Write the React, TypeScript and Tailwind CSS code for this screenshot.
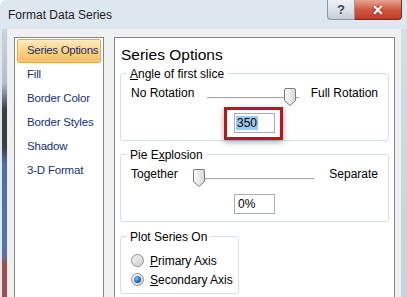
import React from 'react';

const font = { fontFamily: '"Liberation Sans", Arial, sans-serif' };

function Thumb() {
  return (
    <svg width="12" height="18" viewBox="0 0 12 18" className="block">
      <defs>
        <linearGradient id="thumbFill" x1="0" y1="0" x2="1" y2="0">
          <stop offset="0" stopColor="#fdfdfd" />
          <stop offset="1" stopColor="#d6d6d6" />
        </linearGradient>
      </defs>
      <path
        d="M2 0.5 H10 Q11.5 0.5 11.5 2 V12.5 L6 17.5 L0.5 12.5 V2 Q0.5 0.5 2 0.5 Z"
        fill="url(#thumbFill)"
        stroke="#7a7a7a"
        strokeWidth="1"
      />
    </svg>
  );
}

function Slider({ width, thumbLeft }: { width: number; thumbLeft: number }) {
  return (
    <div className="relative mt-[1px] h-[18px] shrink-0" style={{ width }}>
      <div className="absolute left-0 right-0 top-[9px] h-px bg-[#a7a7a7]" />
      <div className="absolute left-0 right-0 top-[10px] h-px bg-[#f4f4f4]" />
      <div className="absolute top-0" style={{ left: thumbLeft }}>
        <Thumb />
      </div>
    </div>
  );
}

function Group({
  legend,
  children,
  className = '',
}: {
  legend: React.ReactNode;
  children: React.ReactNode;
  className?: string;
}) {
  return (
    <div className={`rounded-[3px] border border-[#d5dfe5] ${className}`}>
      <div className="-mt-[8px] ml-[6px] w-fit bg-white px-[3px] text-[12px] leading-[16px] text-black">
        {legend}
      </div>
      {children}
    </div>
  );
}

function Radio({ checked }: { checked?: boolean }) {
  return (
    <div className="flex h-[13px] w-[13px] items-center justify-center rounded-full border border-[#8f8f8f] bg-gradient-to-br from-[#f4f4f4] to-[#cfcfcf]">
      {checked && (
        <div className="h-[7px] w-[7px] rounded-full bg-[radial-gradient(circle_at_35%_35%,#7ec2f0,#1f6fb4_55%,#0b3f7a)]" />
      )}
    </div>
  );
}

const navItems = ['Fill', 'Border Color', 'Border Styles', 'Shadow', '3-D Format'];

export default function App() {
  return (
    <div
      className="flex h-[297px] w-[407px] flex-col overflow-hidden rounded-tl-[6px] bg-gradient-to-b from-[#dfe8f1] to-[#cdd9e6]"
      style={font}
    >
      {/* title bar */}
      <div className="flex h-[29px] shrink-0 items-start">
        <div className="pl-[8px] pt-[7px] text-[12px] leading-[16px] text-[#1b1b1b]">Format Data Series</div>
        <div className="ml-auto mr-[5px] flex">
          <div className="flex h-[20px] w-[28px] items-center justify-center rounded-bl-[4px] border border-t-0 border-[#8c97a5] bg-gradient-to-b from-[#eef1f5] via-[#dde3ea] to-[#c4ccd6] text-[13px] font-bold leading-none text-[#3a4450]">
            ?
          </div>
          <div className="flex h-[20px] w-[47px] items-center justify-center rounded-br-[4px] border border-l-0 border-t-0 border-[#7a2a22] bg-gradient-to-b from-[#e7a493] via-[#cf5a45] to-[#c23a26] text-[14px] font-bold leading-none text-white [text-shadow:0_0_2px_#5a1a10]">
            ✕
          </div>
        </div>
      </div>

      {/* body */}
      <div className="flex min-h-0 flex-1">
        <div className="flex w-[8px] shrink-0">
          <div className="w-[2px] bg-[#dfe6ee]" />
          <div className="w-[5px] bg-[linear-gradient(to_bottom,#c9d4e0_0%,#b4c0ce_20%,#3a3f48_30%,#3a3f48_44%,#4f6f9c_50%,#5677a3_84%,#a24f4a_88%,#a24f4a_100%)]" />
          <div className="w-[1px] bg-[#e6ecf2]" />
        </div>

        <div className="flex flex-1 gap-[10px] bg-[#f0f0f0] pl-[6px] pr-[6px] pt-[8px]">
          {/* nav */}
          <div className="h-[300px] w-[90px] shrink-0 border border-[#828790] bg-white px-[2px] pt-[1px]">
            <div className="flex h-[24px] items-center whitespace-nowrap rounded-[2px] border border-[#e5a64c] bg-gradient-to-b from-[#fde9bd] via-[#fcd383] to-[#fbb95e] pl-[9px] text-[11.5px] tracking-[-0.3px] text-[#1e2f5c] shadow-[inset_0_0_2px_#fff4d8]">
              Series Options
            </div>
            {navItems.map((item) => (
              <div
                key={item}
                className="flex h-[24px] items-center whitespace-nowrap pl-[10px] text-[11.5px] tracking-[-0.2px] text-[#15307a]"
              >
                {item}
              </div>
            ))}
          </div>

          {/* right panel */}
          <div className="h-[300px] flex-1 border border-[#828790] bg-white px-[5px]">
            <div className="mt-[5px] pl-[1px] text-[15.5px] leading-[24px] text-black">Series Options</div>

            <Group
              className="mt-[6px]"
              legend={
                <>
                  <span className="underline">A</span>ngle of first slice
                </>
              }
            >
              <div className="mt-[2px] flex h-[22px] items-start justify-between px-[10px] text-[12px] leading-[18px] text-black">
                <span>No Rotation</span>
                <div className="pt-[3px]">
                  <Slider width={92} thumbLeft={77} />
                </div>
                <span>Full Rotation</span>
              </div>
              <div className="mt-[7px] flex justify-center pb-[7px]">
                <div className="relative">
                  <div className="absolute -left-[10px] -right-[8px] -top-[6px] -bottom-[7px] border-[3px] border-[#c0141c] shadow-[0_2px_6px_rgba(0,0,0,0.35)]" />
                  <div className="flex h-[20px] w-[41px] items-center border border-[#abadb3] bg-white pl-[1px] text-[12px]">
                    <span className="bg-[#99c9ef] px-[1px] leading-[14px]">350</span>
                  </div>
                </div>
              </div>
            </Group>

            <Group
              className="mt-[13px]"
              legend={
                <>
                  Pie E<span className="underline">x</span>plosion
                </>
              }
            >
              <div className="mt-[2px] flex h-[22px] items-start justify-between px-[10px] text-[12px] leading-[18px] text-black">
                <span>Together</span>
                <div className="pt-[3px]">
                  <Slider width={121} thumbLeft={0} />
                </div>
                <span>Separate</span>
              </div>
              <div className="mt-[7px] flex justify-center pb-[7px]">
                <div className="flex h-[20px] w-[41px] items-center border border-[#abadb3] bg-white pl-[3px] text-[12px]">
                  0%
                </div>
              </div>
            </Group>

            <Group className="mt-[14px] w-[119px]" legend="Plot Series On">
              <div className="mt-[6px] pb-[4px] pl-[10px] text-[12px] text-black">
                <div className="flex h-[19px] items-center gap-[6px]">
                  <Radio />
                  <span>
                    <span className="underline">P</span>rimary Axis
                  </span>
                </div>
                <div className="flex h-[19px] items-center gap-[6px]">
                  <Radio checked />
                  <span>
                    <span className="underline">S</span>econdary Axis
                  </span>
                </div>
              </div>
            </Group>
          </div>
        </div>

        <div className="w-[6px] shrink-0 bg-gradient-to-b from-[#d4dde8] to-[#c6d2df]" />
      </div>
    </div>
  );
}
